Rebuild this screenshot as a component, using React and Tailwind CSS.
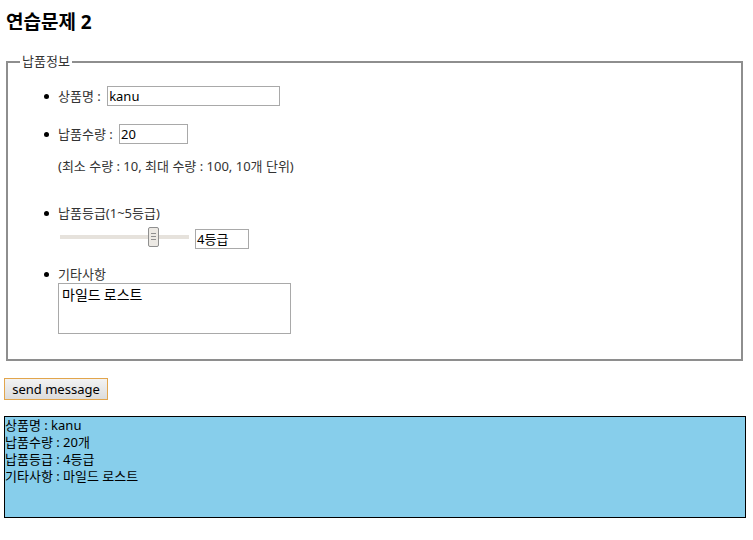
import React from 'react';

const Bullet = () => (
  <span className="w-[5px] h-[5px] rounded-full bg-black shrink-0 mr-[9px]"></span>
);

export default function App() {
  return (
    <div className="w-[753px] h-[540px] bg-white px-[4px] text-[13px] leading-[17px] text-[#222] font-['Noto_Sans','Noto_Sans_CJK_KR',sans-serif]">
      {/* Title */}
      <h2 className="pt-[11px] pl-[2px] text-[19px] leading-[22px] font-bold text-black h-[53px]">연습문제 2</h2>

      {/* Form */}
      <fieldset className="mx-[2px] w-[737px] h-[308px] border-2 border-[#8e8e8e] pl-[10px] pr-[10px]">
        <legend className="px-[2px] ml-[2px] text-[13px] leading-[17px] text-[#333]">납품정보</legend>

        <ul className="pl-[26px] pt-[16px] text-[#333]">
          <li className="flex items-center h-[20px]">
            <Bullet />
            <span>상품명 :&nbsp;</span>
            <div className="ml-[3px] w-[173px] h-[20px] border border-[#a9a9a9] px-[1px] flex items-center text-black">kanu</div>
          </li>

          <li className="flex items-center h-[20px] mt-[18px]">
            <Bullet />
            <span>납품수량 :&nbsp;</span>
            <div className="ml-[3px] w-[69px] h-[20px] border border-[#a9a9a9] px-[1px] flex items-center text-black">20</div>
          </li>
          <li className="pl-[14px] mt-[14px] h-[17px]">(최소 수량 : 10, 최대 수량 : 100, 10개 단위)</li>

          <li className="flex items-center h-[17px] mt-[30px]">
            <Bullet />
            <span>납품등급(1~5등급)</span>
          </li>
          <li className="flex items-center pl-[16px] mt-[2px] h-[25px]">
            <div className="relative w-[129px] h-[20px] flex items-center">
              <div className="w-full h-[4px] bg-[#e6e2dc]"></div>
              <div className="absolute left-[88px] top-0 w-[11px] h-[20px] rounded-[2px] border border-[#8f8f8f] bg-[#ece9e4] flex flex-col items-center justify-center gap-[2px]">
                <span className="w-[5px] h-px bg-[#8f8f8f]"></span>
                <span className="w-[5px] h-px bg-[#8f8f8f]"></span>
                <span className="w-[5px] h-px bg-[#8f8f8f]"></span>
              </div>
            </div>
            <div className="ml-[6px] mt-[5px] w-[54px] h-[20px] border border-[#a9a9a9] px-[1px] flex items-center text-black">4등급</div>
          </li>

          <li className="flex items-center h-[17px] mt-[17px]">
            <Bullet />
            <span>기타사항</span>
          </li>
          <li className="pl-[14px]">
            <div className="w-[233px] h-[51px] border border-[#a9a9a9] px-[3px] pt-[1px] text-[14px] leading-[18px] text-black font-['Noto_Sans_CJK_KR',sans-serif]">마일드 로스트</div>
          </li>
        </ul>
      </fieldset>

      {/* Button */}
      <div className="mt-[17px]">
        <button className="w-[104px] h-[22px] border border-[#e2a54c] bg-gradient-to-b from-[#f3f3f3] to-[#dcdcdc] text-[13px] leading-[17px] text-black">send message</button>
      </div>

      {/* Output */}
      <div className="mt-[16px] w-[742px] h-[102px] bg-[#87ceeb] border border-black text-black leading-[17px]">
        <div>상품명 : kanu</div>
        <div>납품수량 : 20개</div>
        <div>납품등급 : 4등급</div>
        <div>기타사항 : 마일드 로스트</div>
      </div>
    </div>
  );
}
